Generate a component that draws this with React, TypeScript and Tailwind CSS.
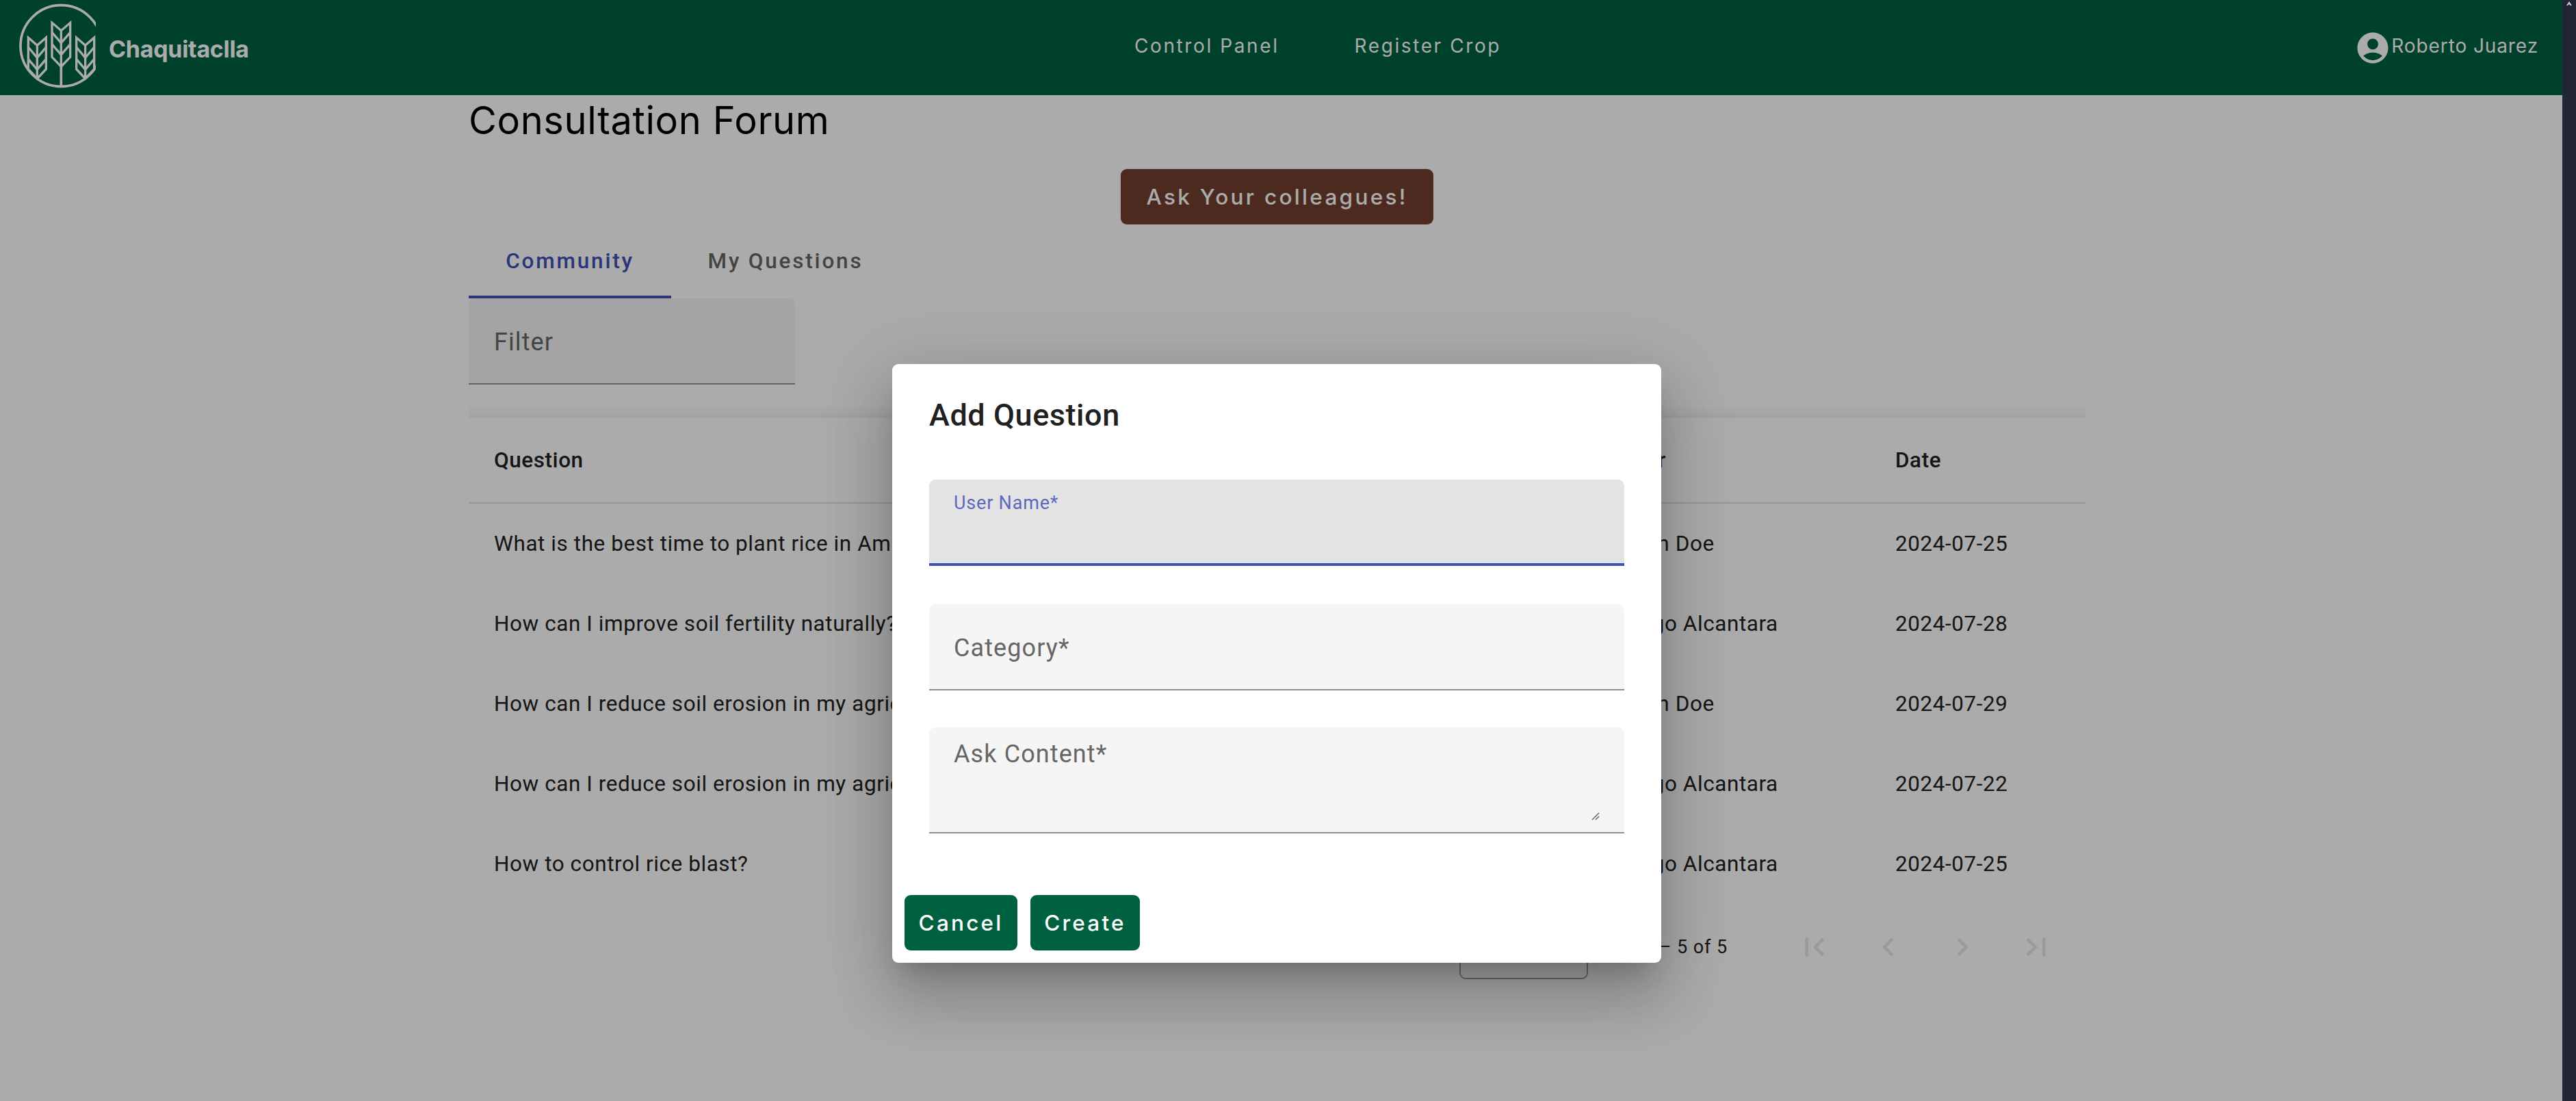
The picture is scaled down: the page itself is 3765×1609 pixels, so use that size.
import React from "react";

const roboto = "font-['Roboto',sans-serif]";
const pop = "font-['Inter',sans-serif]";

const rows = [
  ["What is the best time to plant rice in Amazonas?", "John Doe", "2024-07-25"],
  ["How can I improve soil fertility naturally?", "Diego Alcantara", "2024-07-28"],
  ["How can I reduce soil erosion in my agricultural land?", "John Doe", "2024-07-29"],
  ["How can I reduce soil erosion in my agricultural land?", "Diego Alcantara", "2024-07-22"],
  ["How to control rice blast?", "Diego Alcantara", "2024-07-25"],
];

function Ear({ cx, top, w, h }: { cx: number; top: number; w: number; h: number }) {
  const l = cx - w / 2;
  const r = cx + w / 2;
  const notch = top + 44;
  const bottom = top + h;
  const side = bottom - 42;
  return (
    <g fill="none" stroke="#fff" strokeWidth="10">
      <path d={`M${l} ${top + 10}L${cx} ${notch}L${r} ${top + 10}V${side}L${cx} ${bottom}L${l} ${side}Z`} />
      <path d={`M${l} ${notch + 8}L${cx} ${notch + 54}L${r} ${notch + 8}`} />
      <path d={`M${l} ${notch + 60}L${cx} ${notch + 106}L${r} ${notch + 60}`} />
      <path d={`M${cx} ${notch}V${bottom}`} />
    </g>
  );
}

function Logo() {
  return (
    <svg width="140" height="139" viewBox="0 0 420 417" className="shrink-0">
      <circle cx="268" cy="201" r="178" fill="none" stroke="#fff" strokeWidth="11" />
      <Ear cx={268} top={90} w={80} h={202} />
      <path d="M268 290V376" stroke="#fff" strokeWidth="11" />
      <Ear cx={163} top={155} w={78} h={190} />
      <Ear cx={374} top={155} w={78} h={190} />
    </svg>
  );
}

function MatIcon({ d, className }: { d: string; className: string }) {
  return (
    <svg viewBox="0 0 24 24" className={className} fill="currentColor">
      <path d={d} />
    </svg>
  );
}

function PageBtn({ d }: { d: string }) {
  return (
    <div className="w-[108px] h-[108px] flex items-center justify-center text-[#e6e6e6]">
      <MatIcon d={d} className="w-[54px] h-[54px]" />
    </div>
  );
}

export default function App() {
  return (
    <div className="flex w-full h-[1609px] overflow-hidden bg-white">
      <div className="relative flex-1 min-w-0 h-full">
        <header className="flex items-center h-[139px] bg-[#006140] text-white">
          <div className="flex items-center w-[1658px] shrink-0">
            <Logo />
            <span className={`${pop} font-bold text-[34px] tracking-[-0.3px] ml-[19px] mt-[3px]`}>Chaquitaclla</span>
          </div>
          <nav className={`${pop} flex items-center gap-[110px] text-[28px] tracking-[2.6px] -mt-[5px]`}>
            <span>Control Panel</span>
            <span>Register Crop</span>
          </nav>
          <div className="flex items-center ml-auto mr-[35px]">
            <MatIcon
              className="w-[54px] h-[54px]"
              d="M12 2C6.48 2 2 6.48 2 12s4.48 10 10 10 10-4.48 10-10S17.52 2 12 2zm0 4c1.93 0 3.5 1.57 3.5 3.5S13.93 13 12 13s-3.5-1.57-3.5-3.5S10.07 6 12 6zm0 14c-2.03 0-4.43-.82-6.14-2.88C7.55 15.8 9.68 15 12 15s4.45.8 6.14 2.12C16.43 19.18 14.03 20 12 20z"
            />
            <span className={`${pop} text-[28px] tracking-[0.9px] -mt-[5px]`}>Roberto Juarez</span>
          </div>
        </header>

        <main className="ml-[685px] w-[2363px]">
          <h1 className={`${pop} font-normal text-[56px] leading-[70px] h-[70px] pt-[2px] text-black tracking-[0.6px]`}>Consultation Forum</h1>
          <div className="flex justify-center mt-[38px]">
            <button className={`${pop} font-medium h-[81px] w-[457px] rounded-[9px] bg-[#723f30] text-white text-[31.5px] tracking-[3.3px]`}>
              Ask Your colleagues!
            </button>
          </div>
          <div className={`${roboto} flex h-[108px] text-[31.5px] font-medium tracking-[2.8px]`}>
            <div className="flex items-center justify-center w-[296px] text-[#3f51b5] border-b-[4.5px] border-[#3f51b5] pt-[3px]">Community</div>
            <div className="flex items-center justify-center w-[334px] text-[#666666]">My Questions</div>
          </div>
          <div className={`${roboto} flex items-center w-[477px] h-[126px] pl-[37px] pt-[4px] bg-[#f5f5f5] rounded-t-[9px] border-b-[2.25px] border-[#959595] text-[36px] tracking-[1.1px] text-[#666666]`}>
            Filter
          </div>
          <section className={`${roboto} mt-[29px] text-[31.5px] tracking-[0.56px] text-[#212121]`}>
            <div className="h-[20px] bg-gradient-to-b from-transparent to-black/5" />
            <div className="grid grid-cols-[1646px_402px_1fr] items-center h-[125px] pl-[37px] font-medium border-b-[2px] border-[#e0e0e0]">
              <span>Question</span>
              <span>User</span>
              <span>Date</span>
            </div>
            {rows.map((r, i) => (
              <div key={i} className="grid grid-cols-[1646px_402px_1fr] items-center h-[117px] pl-[37px]">
                <span>{r[0]}</span>
                <span>{r[1]}</span>
                <span>{r[2]}</span>
              </div>
            ))}
            <div className="flex items-center justify-end h-[126px] pr-[18px] text-[27px] tracking-[0.9px]">
              <div className="w-[188px] h-[90px] mt-[4px] border-[2px] border-[#a0a0a0] rounded-[9px]" />
              <span className="ml-[80px] mr-[73px] whitespace-nowrap">1 – 5 of 5</span>
              <PageBtn d="M18.41 16.59L13.82 12l4.59-4.59L17 6l-6 6 6 6zM6 6h2v12H6z" />
              <PageBtn d="M15.41 16.59L10.83 12l4.58-4.59L14 6l-6 6 6 6 1.41-1.41z" />
              <PageBtn d="M8.59 16.59L13.17 12 8.59 7.41 10 6l6 6-6 6-1.41-1.41z" />
              <PageBtn d="M5.59 7.41L10.18 12l-4.59 4.59L7 18l6-6-6-6zM16 6h2v12h-2z" />
            </div>
          </section>
        </main>

        <div className="absolute inset-0 bg-[rgba(0,0,0,0.33)]" />

        <div className="absolute left-[1304px] top-[532px] w-[1124px] h-[875px] bg-white rounded-[9px] flex flex-col shadow-[0_25px_34px_-16px_rgba(0,0,0,0.2),0_54px_86px_7px_rgba(0,0,0,0.14),0_20px_104px_18px_rgba(0,0,0,0.12)]">
          <h2 className={`${roboto} ml-[54px] mt-[49px] h-[52px] leading-[52px] text-[45px] font-medium tracking-[0.56px] text-[#212121]`}>Add Question</h2>
          <div className="mx-[54px] mt-[68px] flex flex-col">
            <div className={`${roboto} h-[126px] bg-[#e3e3e3] rounded-t-[9px] border-b-[4.5px] border-[#3f51b5] pl-[36px] pt-[18px] text-[27px] leading-[32px] tracking-[0.8px] text-[#5c68c0]`}>
              User Name*
            </div>
            <div className={`${roboto} flex items-center mt-[56px] h-[126px] pt-[3px] bg-[#f5f5f5] rounded-t-[9px] border-b-[2.25px] border-[#8f8f8f] pl-[36px] text-[36px] tracking-[1.1px] text-[#666666]`}>
              Category*
            </div>
            <div className={`${roboto} relative mt-[54px] h-[155px] bg-[#f5f5f5] rounded-t-[9px] border-b-[2.25px] border-[#8f8f8f] pl-[36px] pr-[36px] pt-[17px] text-[36px] leading-[44px] tracking-[1.1px] text-[#666666]`}>
              <textarea
                aria-label="Ask Content"
                placeholder="Ask Content*"
                className="block w-full h-[120px] bg-transparent outline-none resize-none placeholder:text-[#666666]"
              />
              <svg width="12" height="12" viewBox="0 0 12 12" className="absolute right-[36px] bottom-[17px]">
                <path d="M11 1L1 11M11 6L6 11" stroke="#555" strokeWidth="1.2" fill="none" />
              </svg>
            </div>
          </div>
          <div className={`${pop} flex items-center gap-[19px] ml-[18px] mt-[90px] text-white text-[31.5px] font-medium tracking-[3.2px]`}>
            <button className="w-[165px] h-[81px] rounded-[9px] bg-[#006140]">Cancel</button>
            <button className="w-[160px] h-[81px] rounded-[9px] bg-[#006140]">Create</button>
          </div>
        </div>
      </div>

      <aside className="w-[20px] shrink-0 h-full bg-[#222633] flex justify-center pt-[2px]">
        <svg width="8" height="6" viewBox="0 0 8 6"><path d="M0 6L4 0L8 6H5.5L4 4L2 6Z" fill="#c9cbd2" /></svg>
      </aside>
    </div>
  );
}
